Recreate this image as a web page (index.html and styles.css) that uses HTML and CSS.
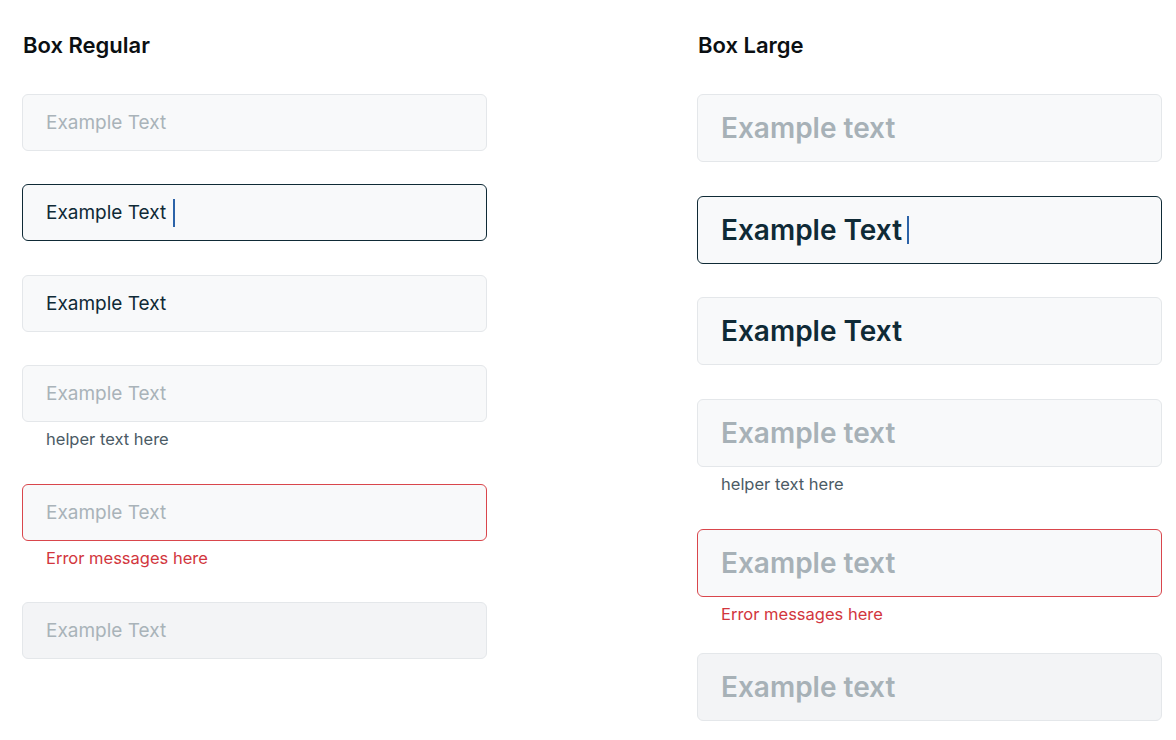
FILE: index.html
```html
<!DOCTYPE html>
<html>
<head>
<meta charset="utf-8">
<link rel="stylesheet" href="styles.css">
</head>
<body>
<div class="page">
  <section class="col col-regular">
    <h2 class="title">Box Regular</h2>
    <div class="box box-r placeholder">Example Text</div>
    <div class="box box-r focused filled">Example Text<span class="caret"></span></div>
    <div class="box box-r filled">Example Text</div>
    <div class="box box-r placeholder">Example Text</div>
    <div class="helper helper-r">helper text here</div>
    <div class="box box-r placeholder error">Example Text</div>
    <div class="errmsg helper-r">Error messages here</div>
    <div class="box box-r placeholder disabled">Example Text</div>
  </section>
  <section class="col col-large">
    <h2 class="title">Box Large</h2>
    <div class="box box-l placeholder">Example text</div>
    <div class="box box-l focused filled">Example Text<span class="caret caret-l"></span></div>
    <div class="box box-l filled">Example Text</div>
    <div class="box box-l placeholder">Example text</div>
    <div class="helper helper-l">helper text here</div>
    <div class="box box-l placeholder error">Example text</div>
    <div class="errmsg helper-l">Error messages here</div>
    <div class="box box-l placeholder disabled">Example text</div>
  </section>
</div>
</body>
</html>
```

FILE: styles.css
```css
html, body {
  margin: 0;
  padding: 0;
  background: #ffffff;
}
body {
  font-family: Inter, "Noto Sans", sans-serif;
}
.page {
  display: flex;
  padding: 33px 0 0 22px;
  gap: 210px;
}
.col {
  width: 465px;
  display: flex;
  flex-direction: column;
}
.title {
  margin: 0;
  font-size: 22px;
  line-height: 24px;
  font-weight: 600;
  color: #0b0f12;
  padding-left: 1px;
  margin-bottom: 37px;
}
.box {
  box-sizing: border-box;
  border: 1px solid #e4e7ea;
  border-radius: 6px;
  background: #f8f9fa;
  display: flex;
  align-items: center;
  padding-left: 23px;
  color: #0f2a36;
}
.box-r {
  height: 57px;
  font-size: 19px;
  margin-bottom: 33px;
}
.box-r.focused {
  margin-bottom: 34px;
}
.box-l {
  height: 68px;
  font-size: 28px;
  font-weight: 600;
  margin-bottom: 34px;
}
.box-l.focused {
  margin-bottom: 33px;
}
.placeholder {
  color: #a9b3b9;
}
.box-l.placeholder {
  color: #a7b1b7;
}
.focused {
  border-color: #0f2a36;
}
.error {
  border-color: #d9464c;
}
.disabled {
  background: #f3f4f6;
}
.caret {
  display: inline-block;
  width: 2px;
  height: 28px;
  background: #2c63a8;
  margin-left: 7px;
}
.caret-l {
  height: 28px;
  margin-left: 5px;
}
.helper, .errmsg {
  font-size: 16.5px;
  line-height: 20px;
  padding-left: 24px;
}
.helper {
  color: #4b5b65;
}
.errmsg {
  color: #d2363d;
}
.box-r + .helper, .box-r + .errmsg {
  margin-top: -26px;
}
.box-l + .helper, .box-l + .errmsg {
  margin-top: -27px;
}
.helper-r { margin-bottom: 35px; }
.helper-l { margin-bottom: 35px; }
.col-regular .errmsg { margin-bottom: 34px; }
.col-large .errmsg { margin-bottom: 29px; }
```
